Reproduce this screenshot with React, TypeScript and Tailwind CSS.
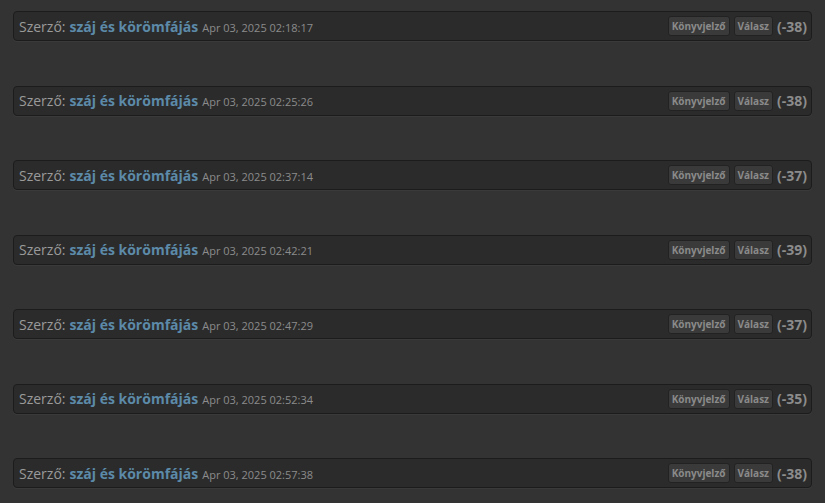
import React from "react";

const posts = [
  { date: "Apr 03, 2025 02:18:17", score: "-38" },
  { date: "Apr 03, 2025 02:25:26", score: "-38" },
  { date: "Apr 03, 2025 02:37:14", score: "-37" },
  { date: "Apr 03, 2025 02:42:21", score: "-39" },
  { date: "Apr 03, 2025 02:47:29", score: "-37" },
  { date: "Apr 03, 2025 02:52:34", score: "-35" },
  { date: "Apr 03, 2025 02:57:38", score: "-38" },
];

function PostHeader({ date, score }: { date: string; score: string }) {
  return (
    <div className="flex h-[30px] items-center justify-between rounded-[4px] border border-[#1c1c1c] bg-[#2b2b2b] pl-[5px] pr-[4px] shadow-[0_1px_0_#3a3a3a]">
      <div className="flex items-baseline whitespace-nowrap">
        <span className="text-[14px] text-[#9a9a9a]">Szerző:</span>
        <span className="ml-[4px] text-[14px] font-bold text-[#5c8aa8]">
          száj és körömfájás
        </span>
        <span className="ml-[4px] text-[11px] text-[#8c8c8c]">{date}</span>
      </div>
      <div className="flex items-center">
        <button className="h-[20px] rounded-[3px] border border-[#222] bg-[#3a3a3a] px-[3px] text-[10px] font-bold leading-none text-[#8a8a8a]">
          Könyvjelző
        </button>
        <button className="ml-[4px] h-[20px] rounded-[3px] border border-[#222] bg-[#3a3a3a] px-[3px] text-[10px] font-bold leading-none text-[#8a8a8a]">
          Válasz
        </button>
        <span className="ml-[4px] text-[14px] font-bold text-[#8c8c8c]">
          ({score})
        </span>
      </div>
    </div>
  );
}

export default function App() {
  return (
    <div
      className="min-h-[503px] bg-[#333333] px-[13px] pt-[11px]"
      style={{ fontFamily: '"Open Sans", "Noto Sans", sans-serif' }}
    >
      <div className="flex flex-col gap-[44.5px]">
        {posts.map((p, i) => (
          <PostHeader key={i} date={p.date} score={p.score} />
        ))}
      </div>
    </div>
  );
}
